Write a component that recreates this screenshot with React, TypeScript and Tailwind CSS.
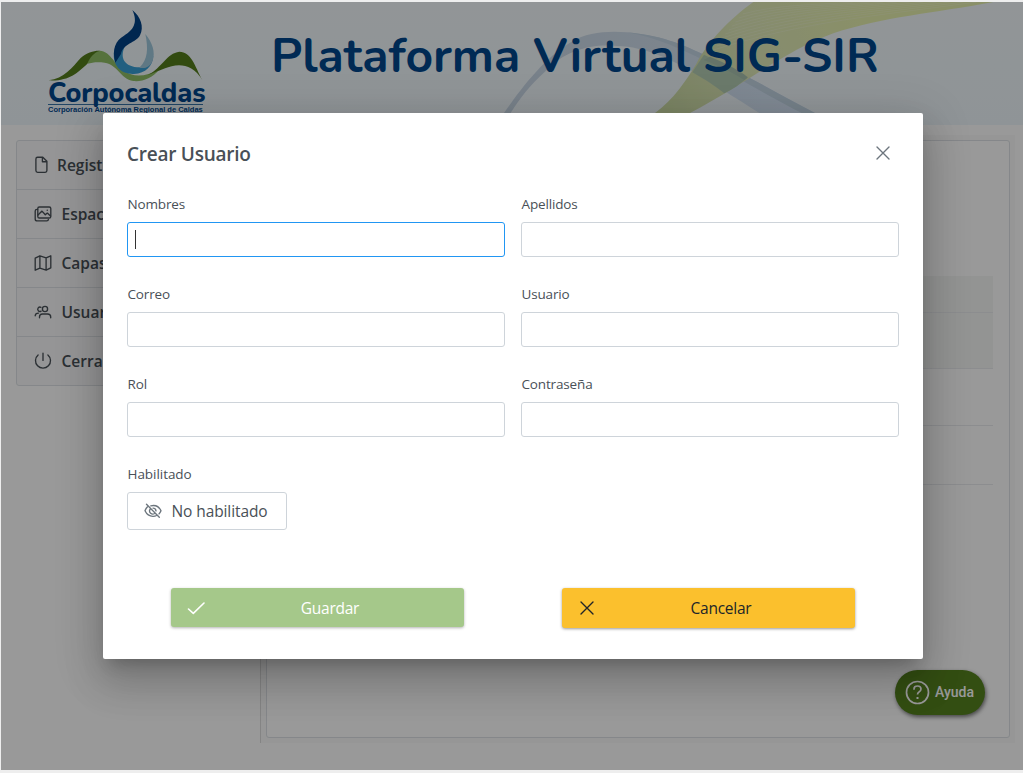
import type { ReactNode } from "react";

const segoe = "font-['Segoe_UI','Open_Sans',sans-serif]";

function Logo() {
  return (
    <svg className="absolute left-[43px] top-[2px] h-[112px] w-[166px]" viewBox="0 0 498 336">
      <path d="M130 179 C136 158 148 141 168 140 C198 142 207 175 240 200 C268 221 305 218 345 197 C325 222 295 234 268 231 C228 224 222 182 182 176 C160 173 146 175 130 179Z" fill="#8fbe66" />
      <path d="M14 229 C60 224 85 190 110 162 C128 146 150 139 168 140 C150 145 138 160 130 179 C100 207 75 232 14 229Z" fill="#547d1c" />
      <path d="M312 213 C355 190 368 148 406 143 C442 143 452 185 475 228 C455 195 430 184 405 184 C375 184 350 200 312 213Z" fill="#547d1c" />
      <path d="M210 142 C204 188 235 212 270 210 C305 207 326 187 328 155 C318 175 305 188 288 190 C240 190 226 160 243 126 C228 128 216 132 210 142Z" fill="#389fd5" />
      <path d="M304 90 C325 115 335 145 326 170 C318 188 305 195 286 191 C312 166 313 134 304 90Z" fill="#9fc8dc" />
      <path d="M265 18 C290 38 301 68 288 94 C275 118 237 118 231 150 L214 176 C203 134 215 110 240 95 C268 78 283 56 265 18Z" fill="#004186" />
    </svg>
  );
}

function HeaderArt() {
  return (
    <svg className="absolute inset-0 h-full w-full" viewBox="1 2 1022 123" preserveAspectRatio="none">
      <defs>
        <linearGradient id="sky" x1="0" y1="0" x2="0" y2="1">
          <stop offset="0" stopColor="#f3f9fc" />
          <stop offset="1" stopColor="#eff7fc" />
        </linearGradient>
        <linearGradient id="leaf" gradientUnits="userSpaceOnUse" x1="500" y1="330" x2="1100" y2="10">
          <stop offset="0" stopColor="#cbdba5" />
          <stop offset=".45" stopColor="#dfe9b9" />
          <stop offset="1" stopColor="#e7f1ad" />
        </linearGradient>
        <linearGradient id="ribbon" x1="0" y1="0" x2="1" y2="0">
          <stop offset="0" stopColor="#c7d6e5" />
          <stop offset=".5" stopColor="#d0deec" />
          <stop offset="1" stopColor="#d6e7fa" />
        </linearGradient>
      </defs>
      <path d="M1 2H1023V125H1Z" fill="url(#sky)" />
      <g transform="translate(500 0) scale(.33333)">
        <path d="M12 339 C60 270 130 175 215 125 C260 98 320 92 380 97 C500 108 560 140 640 178 C740 226 850 290 945 339 H778 C700 290 640 250 580 215 C510 180 440 140 350 138 C270 131 195 152 135 215 C90 255 60 294 32 339Z" fill="url(#ribbon)" />
        <path d="M380 97 C500 108 560 140 640 178 C740 226 850 290 945 339 H905 C800 286 710 230 630 190 C550 150 470 112 380 97Z" fill="#c3d5e5" />
        <path d="M465 339 C520 300 560 240 590 190 C620 130 690 55 760 6 H1480 C1300 40 1150 50 1000 100 C850 155 740 250 570 339Z" fill="url(#leaf)" />
        <path d="M612 164 C660 185 712 210 742 234 C720 252 700 268 673 280 C640 255 610 235 577 217Z" fill="#b3ccb3" />
        <path d="M630 170 C675 188 730 218 744 232 L733 240 C702 220 655 196 610 180Z" fill="#a8c2b0" />
        <g fill="none" stroke="#f3f7e2" strokeWidth="2" opacity=".45">
          <path d="M1430 6C1130 48 920 62 640 150" /><path d="M1390 6C1110 44 900 55 650 138" />
          <path d="M1350 6C1090 40 890 50 658 126" /><path d="M1310 6C1070 36 880 44 666 114" />
          <path d="M1270 6C1050 32 870 38 676 102" /><path d="M1230 6C1030 28 860 32 686 90" />
          <path d="M1190 6C1010 25 850 27 696 78" /><path d="M1150 6C990 21 840 23 706 66" />
          <path d="M1110 6C970 18 830 18 716 54" /><path d="M1060 6C940 15 830 14 728 42" />
        </g>
      </g>
    </svg>
  );
}

function Icon({ children, className = "h-[18px] w-[18px]" }: { children: ReactNode; className?: string }) {
  return (
    <svg className={`${className} shrink-0`} viewBox="0 0 18 18" fill="none" stroke="currentColor" strokeWidth="1.35" strokeLinecap="round" strokeLinejoin="round">
      {children}
    </svg>
  );
}

const cross = <path d="M3 3l12 12M15 3L3 15" />;

const items = [
  { label: "Registr", icon: <path d="M3.6 1.2h5.2l4.1 4.1v9.3q0 1.7-1.7 1.7H3.6q-1.7 0-1.7-1.7V2.9Q1.9 1.2 3.6 1.2zM8.4 1.4v4.3h4.3" /> },
  { label: "Espac", icon: <><rect x="3.8" y="2" width="13" height="11" rx="1.6" /><path d="M3.6 4.3H3Q1.2 4.3 1.2 6v7.9q0 2 2 2h9.5q1.7 0 1.7-1.6M4 10l4-3.9 3.3 3.7 2-1.7 3.2 3M13.2 5.2h.1" /></> },
  { label: "Capas", icon: <path d="M1.2 4.1l4.7-2.3 6.2 2.1 4.7-2.1v12.1l-4.7 2.3-6.2-2.1-4.7 2.1zM5.9 2v12M12.1 4v12" /> },
  { label: "Usuar", icon: <><circle cx="11" cy="6" r="2.6" /><path d="M7 4.3a2.2 2.2 0 1 0 .1 3.8M5.5 14.7v-.7q0-3 3-3h5q3.2 0 3.2 3v.7M1.2 12.8q.1-2.7 3.3-2.7" /></> },
  { label: "Cerrar", icon: <path d="M9 1.2v7.2M4.1 2.9A7.5 7.5 0 1 0 13.9 2.9" /> },
];

function Field({ label, focused = false }: { label: string; focused?: boolean }) {
  return (
    <label className="block h-[90px]">
      <span className="block h-[28px] pl-[0.5px] text-[13.5px] leading-[20px] tracking-[-0.15px]">{label}</span>
      <span className={`flex h-[35px] items-center rounded-[3px] border bg-white pl-[7px] ${focused ? "border-[#2196f3]" : "border-[#ced4da]"}`}>
        {focused && <span className="h-[19px] w-px bg-[#333]" />}
      </span>
    </label>
  );
}

function Dialog() {
  return (
    <section className="h-[546px] w-[820px] rounded-[2px] bg-white px-6 text-[#495057] shadow-[0_11px_15px_-7px_rgba(0,0,0,0.2),0_24px_38px_3px_rgba(0,0,0,0.14),0_9px_46px_8px_rgba(0,0,0,0.12)]">
      <header className="flex h-[81px] items-center justify-between pr-[7.5px]">
        <h2 className="pt-[2px] text-[19px] font-semibold tracking-[-0.25px]">Crear Usuario</h2>
        <button aria-label="Cerrar" className="pb-[2px] text-[#6c757d]"><Icon>{cross}</Icon></button>
      </header>
      <form className="grid grid-cols-2 gap-x-4">
        <Field label="Nombres" focused />
        <Field label="Apellidos" />
        <Field label="Correo" />
        <Field label="Usuario" />
        <Field label="Rol" />
        <Field label="Contraseña" />
      </form>
      <div className="h-[124px]">
        <div className="h-[28px] pl-[0.5px] text-[13.5px] leading-[20px] tracking-[-0.05px]">Habilitado</div>
        <button className="flex h-[38px] w-[160px] items-center rounded-[3px] border border-[#ced4da] pl-[15.5px] text-[15.5px] tracking-[-0.1px]">
          <Icon className="mr-[10px] h-[18px] w-[18px] text-[#6c757d]">
            <path d="M3.3 5Q1.8 6.5 1 8.8q2.6 5.5 8 5.5 2 0 3.6-.8M6.8 3.8Q14 2.1 17 8.8q-.7 1.9-2 3.1M2.5 2.3l12.8 13M6 7.3a3.2 3.2 0 0 0 4.6 4.2M9 6.1q2.8 0 3 2.8" />
          </Icon>
          <span className="pt-[2px]">No habilitado</span>
        </button>
      </div>
      <footer className="flex gap-[98px] pl-11 text-[15.5px] tracking-[-0.25px]">
        <button className="flex h-[39px] w-[293px] items-center rounded-[3px] bg-[#a5c88a] pl-4 text-white shadow-[0_1px_3px_rgba(0,0,0,0.3)]">
          <Icon><path strokeWidth="1.6" d="M1.5 10l4.8 4.4L17 4" /></Icon>
          <span className="flex-1 pr-[9px] pt-[3px] text-center">Guardar</span>
        </button>
        <button className="flex h-10 w-[293px] items-center rounded-[3px] bg-[#fbc02d] pl-4 text-[#212529] shadow-[0_1px_3px_rgba(0,0,0,0.4)]">
          <Icon>{cross}</Icon>
          <span className="flex-1 pr-[9px] pt-[2px] text-center">Cancelar</span>
        </button>
      </footer>
    </section>
  );
}

export default function App() {
  return (
    <div className={`h-[773px] w-[1023px] overflow-hidden bg-[#eeeeee] pl-px pt-[2px] ${segoe}`}>
      <div className="relative h-[768px] w-[1022px] overflow-hidden bg-white text-[#495057]">
        <header className="relative h-[123px] overflow-hidden">
          <HeaderArt />
          <Logo />
          <div className="absolute left-[47px] top-[78px] w-[155px] text-[#00478d]">
            <div className="h-[25px] border-b border-[#3975a8] font-['Nunito','Lato',sans-serif] text-[27px] font-extrabold leading-[27px] tracking-[-0.1px]">Corpocaldas</div>
            <div className="whitespace-nowrap font-['Liberation_Sans',sans-serif] text-[7.5px] font-bold leading-[10px]">Corporación Autónoma Regional de Caldas</div>
          </div>
          <h1 className="absolute left-[270px] top-[22px] whitespace-nowrap font-['Nunito','Open_Sans',sans-serif] text-[48px] font-bold leading-[64px] text-[#00478d]">Plataforma Virtual SIG-SIR</h1>
        </header>
        <div className="flex items-start pl-[15px] pt-[10px]">
          <nav className="mt-[5px] w-[239px] rounded-[3px] border border-[#dee2e6] bg-[#f8f9fa]">
            {items.map((item, index) => (
              <div key={item.label} className={`flex items-center border-[#dee2e6] pl-[17px] text-[15.5px] font-semibold ${index ? "h-[49px] gap-[9.5px] border-t" : "h-[48px] gap-[5px]"}`}>
                <Icon>{item.icon}</Icon><span className="pt-[2px]">{item.label}</span>
              </div>
            ))}
          </nav>
          <main className="ml-[5px] h-[608px] w-[755px] border-l border-[#dddddd] bg-[#fafafa] p-[5px]">
            <section className="h-[598px] rounded-[3px] border border-[#dee2e6] bg-white px-4 pt-[135px]">
              <div className="h-[37px] border-b border-[#e9ecef] bg-[#f5f7f6]" />
              <div className="h-[56px] border-b border-[#e9ecef] bg-[#f5f7f6]" />
              <div className="h-[57px] border-b border-[#e9ecef]" />
              <div className="h-[59px] border-b border-[#e9ecef]" />
            </section>
          </main>
        </div>
        <button className="absolute left-[894px] top-[668px] flex h-[45px] w-[90px] items-center gap-[5px] rounded-full bg-[#55821f] pl-[10px] font-['Roboto',sans-serif] text-[14px] font-medium text-white shadow-[1px_2px_4px_rgba(0,0,0,0.55)]">
          <svg className="h-[25px] w-[25px]" viewBox="0 0 25 25" fill="none" stroke="currentColor" strokeWidth="1.7"><circle cx="12.5" cy="12.5" r="11" /><path d="M9 9.7V9q0-3 3.5-3t3.5 3q0 1.8-2 2.9-1.5.8-1.5 2.7" /><path d="M12.5 17v2" strokeWidth="2" /></svg>
          Ayuda
        </button>
        <div className="absolute inset-0 bg-black/40 pl-[102px] pt-[111px]">
          <Dialog />
        </div>
      </div>
    </div>
  );
}
